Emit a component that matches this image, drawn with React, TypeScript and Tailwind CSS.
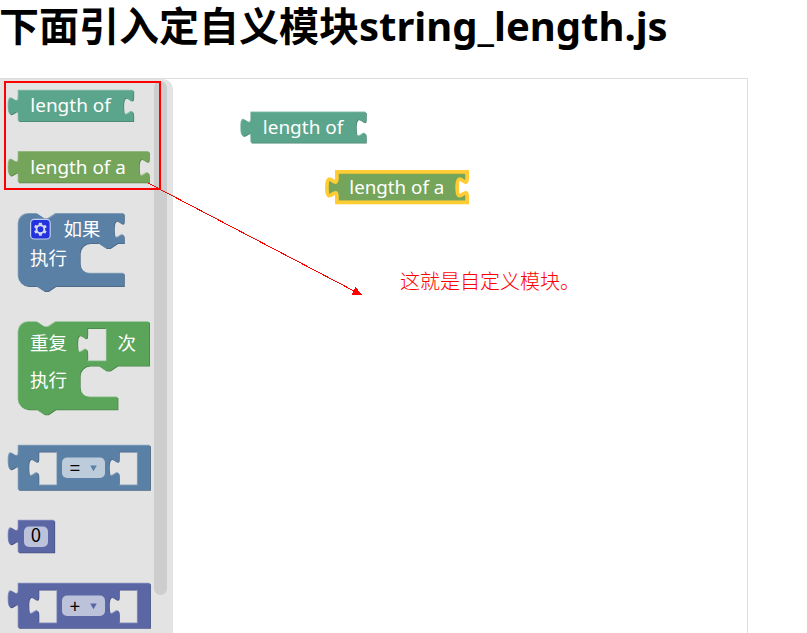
import type { ReactNode } from 'react';

const FONT = "'Noto Sans', 'Open Sans', 'Noto Sans CJK SC', sans-serif";
const FIELD_FONT = "'Noto Sans CJK SC', 'Noto Sans', sans-serif";

const PALETTE = {
  teal: { main: '#5ba58c', light: '#8cc0ae', dark: '#498470' },
  olive: { main: '#75a55b', light: '#9ec08c', dark: '#5e8449' },
  blue: { main: '#5b80a5', light: '#8ca6c0', dark: '#496684' },
  green: { main: '#5ba55b', light: '#8cc08c', dark: '#498449' },
  indigo: { main: '#5b67a5', light: '#8c95c0', dark: '#495284' },
};
type Tone = keyof typeof PALETTE;

const SOCKET = 'v 5 c 0,10 -8,-8 -8,7.5 s 8,-2.5 8,7.5';
const PLUG = 'V 20 c 0,-10 -8,8 -8,-7.5 s 8,2.5 8,-7.5 z';

const valuePath = (w: number) => `M 0,0 H ${w} ${SOCKET} V 24.5 H 0 ${PLUG}`;
const hole = (x: number, r: number, b: number) =>
  `M ${x},5 H ${r} V ${b} H ${x} V 25 c 0,-10 -8,8 -8,-7.5 s 8,2.5 8,-7.5 z`;

const IF_PATH =
  `M 0,8 A 8,8 0 0,1 8,0 H 15 l 6,4 3,0 6,-4 H 84.5 ${SOCKET} V 23.7 H 79.2 l -6,4 -3,0 -6,-4 h -7 a 8,8 0 0,0 -8,8 V 39.8 a 8,8 0 0,0 8,8 H 84.5 V 58 H 29.7 l -6,4 -3,0 -6,-4 H 8 a 8,8 0 0,1 -8,-8 z`;
const REPEAT_PATH =
  'M 0,8 A 8,8 0 0,1 8,0 H 15 l 6,4 3,0 6,-4 H 104.7 V 35 H 79.2 l -6,4 -3,0 -6,-4 h -7 a 8,8 0 0,0 -8,8 V 52.1 a 8,8 0 0,0 8,8 H 79.4 V 70 H 29.7 l -6,4 -3,0 -6,-4 H 8 a 8,8 0 0,1 -8,-8 z ' +
  hole(55.2, 70.6, 31.4);
const OPERATOR_PATH = `M 0,0 H 105.4 V 35.5 H 0 ${PLUG} ${hole(16.1, 31, 31.8)} ${hole(80.5, 95.4, 31.8)}`;
const NUMBER_PATH = `M 0,0 H 28.8 V 25.6 H 0 ${PLUG}`;

function Shape({ x, y, d, tone, selected }: { x: number; y: number; d: string; tone: Tone; selected?: boolean }) {
  const c = PALETTE[tone];
  return (
    <g transform={`translate(${x} ${y}) scale(1.25)`} fillRule="evenodd">
      {!selected && <path d={d} fill={c.dark} transform="translate(0.6 0.6)" />}
      {!selected && <path d={d} fill={c.light} transform="translate(-0.6 -0.6)" />}
      <path d={d} fill={c.main} stroke={selected ? '#fc3' : 'none'} strokeWidth={3} />
    </g>
  );
}

function Label({ x, y, w, children }: { x: number; y: number; w?: number; children: ReactNode }) {
  return (
    <text x={x} y={y} fill="#fff" fontSize={18.5} fontFamily={FONT} textLength={w} lengthAdjust="spacingAndGlyphs">
      {children}
    </text>
  );
}

function FieldText({ x, y, children }: { x: number; y: number; children: ReactNode }) {
  return (
    <text x={x} y={y} fill="#000" fontSize={18.5} fontWeight={400} fontFamily={FIELD_FONT}>
      {children}
    </text>
  );
}

function Row({ className, children }: { className: string; children: ReactNode }) {
  return <svg className={`block w-[153px] shrink-0 overflow-visible ${className}`}>{children}</svg>;
}

function Operator({ sign, tone, field }: { sign: string; tone: Tone; field: string }) {
  return (
    <>
      <Shape x={18.4} y={0.6} d={OPERATOR_PATH} tone={tone} />
      <rect x="62" y="12.6" width="43" height="20.4" rx="5" fill={field} />
      <FieldText x={69.8} y={29.5}>{sign}</FieldText>
      <path d="M 90.2 20.4 H 96.8 L 93.5 26.2 Z" fill={PALETTE[tone].main} />
    </>
  );
}

function Gear() {
  return (
    <g>
      <rect x="30.6" y="6.4" width="19.6" height="19.6" rx="3.8" fill="#2233dd" stroke="#c3cff2" strokeWidth="1.2" />
      <g fill="#d0d8ee" transform="translate(40.4 16.2)">
        {[0, 60, 120, 180, 240, 300].map((a) => (
          <rect key={a} x="-1.5" y="-6.5" width="3" height="3" rx="0.5" transform={`rotate(${a})`} />
        ))}
        <circle r="3.9" fill="none" stroke="#d0d8ee" strokeWidth="1.9" />
      </g>
    </g>
  );
}

function Flyout() {
  return (
    <aside className="flex h-full w-[173px] shrink-0 justify-between overflow-hidden rounded-tr-[10px] bg-[#e3e3e3] pr-[6px]">
      <div className="flex w-[153px] shrink-0 flex-col pt-[11px]">
        <Row className="h-[61px]">
          <Shape x={18.4} y={0.6} d={valuePath(92)} tone="teal" />
          <Label x={30.3} y={22} w={80.5}>length of</Label>
        </Row>
        <Row className="h-[62px]">
          <Shape x={18.4} y={0.8} d={valuePath(104.5)} tone="olive" />
          <Label x={30.3} y={23} w={95.5}>length of a</Label>
        </Row>
        <Row className="h-[108px]">
          <Shape x={18.4} y={0.7} d={IF_PATH} tone="blue" />
          <Gear />
          <Label x={63.5} y={22.5}>如果</Label>
          <Label x={30} y={52}>执行</Label>
        </Row>
        <Row className="h-[124px]">
          <Shape x={18.4} y={1} d={REPEAT_PATH} tone="green" />
          <Label x={30} y={29}>重复</Label>
          <Label x={117.5} y={29}>次</Label>
          <Label x={30} y={66}>执行</Label>
        </Row>
        <Row className="h-[75px]">
          <Operator sign="=" tone="blue" field="#bdccdb" />
        </Row>
        <Row className="h-[63px]">
          <Shape x={18.4} y={0.6} d={NUMBER_PATH} tone="indigo" />
          <rect x="24" y="6.6" width="24" height="20.4" rx="5" fill="#bdc2db" />
          <FieldText x={30.7} y={22}>0</FieldText>
        </Row>
        <Row className="h-[50px]">
          <Operator sign="+" tone="indigo" field="#bdc2db" />
        </Row>
      </div>
      <div className="mt-[2px] h-[514px] w-[13px] rounded-full bg-[#cdcdcd]" />
    </aside>
  );
}

export default function App() {
  return (
    <div className="flex h-[633px] w-[807px] flex-col overflow-hidden bg-white">
      <h1 className="-ml-px h-[78px] shrink-0 whitespace-nowrap font-['Noto_Sans','Noto_Sans_CJK_SC',sans-serif] text-[40px] leading-[52px] font-bold text-black">
        下面引入定自义模块<span>string_length.js</span>
      </h1>
      <main className="relative flex min-h-0 w-[748px] flex-1 border-t border-r border-[#ddd]">
        <Flyout />
        <svg className="min-w-0 flex-1 self-stretch" viewBox="173 79 574 554" preserveAspectRatio="xMinYMin meet">
          <Shape x={251} y={112.2} d={valuePath(92)} tone="teal" />
          <Label x={262.8} y={134} w={80.5}>length of</Label>
          <Shape x={336.9} y={171.8} d={valuePath(104.2)} tone="olive" selected />
          <Label x={349.3} y={194} w={95}>length of a</Label>
          <text x="400" y="288.5" fill="#f00" fontSize="20" fontWeight="300" fontFamily="'Noto Sans CJK SC', sans-serif">
            这就是自定义模块。
          </text>
        </svg>
        <svg className="pointer-events-none absolute top-0 left-0 h-[554px] w-[747px]" viewBox="0 79 747 554" shapeRendering="crispEdges">
          <rect x="5" y="82" width="155" height="107" fill="none" stroke="#f00" strokeWidth="2" />
          <path d="M 148 183 L 356 292" stroke="#f00" strokeWidth="1" />
          <path d="M 362 295 L 355.5 287 L 351.5 295 Z" fill="#f00" />
        </svg>
      </main>
    </div>
  );
}
